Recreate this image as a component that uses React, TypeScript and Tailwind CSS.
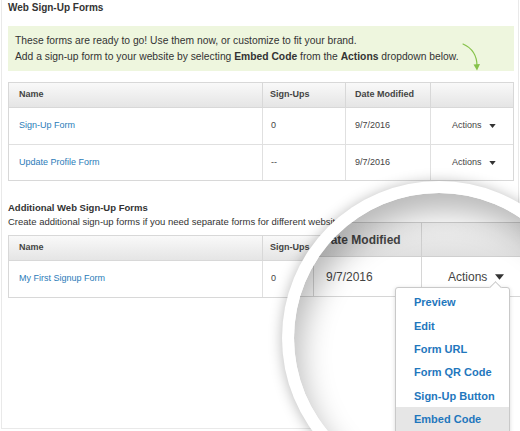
import React from "react";

const font = "font-['Liberation_Sans',Arial,sans-serif]";

type Row = { name: string; signups: string; date: string };

function Caret({ className }: { className?: string }) {
  return (
    <svg viewBox="0 0 8 5" className={className}>
      <path d="M0 0h8L4 5z" fill="currentColor" />
    </svg>
  );
}

function FormsTable({ rows }: { rows: Row[] }) {
  return (
    <div className="border border-[#d8d8d8] text-[9px] text-[#444]">
      <div className="grid grid-cols-[253px_83px_85px_83px] h-[25px] bg-gradient-to-b from-[#f9f9f9] to-[#e5e5e5] font-bold border-b border-[#d8d8d8]">
        <div className="flex items-center pl-[10px]">Name</div>
        <div className="flex items-center pl-[7px] border-l border-[#d8d8d8]">Sign-Ups</div>
        <div className="flex items-center pl-[9px] border-l border-[#d8d8d8]">Date Modified</div>
        <div className="border-l border-[#d8d8d8]" />
      </div>
      {rows.map((r, i) => (
        <div
          key={r.name}
          className={`grid grid-cols-[253px_83px_85px_83px] h-[36px] ${i > 0 ? "border-t border-[#e0e0e0]" : ""}`}
        >
          <div className="flex items-center pl-[10px] text-[#2b7cb9]">{r.name}</div>
          <div className="flex items-center pl-[8px] border-l border-[#e0e0e0]">{r.signups}</div>
          <div className="flex items-center pl-[9px] border-l border-[#e0e0e0]">{r.date}</div>
          <div className="flex items-center pl-[21px] gap-[7px] border-l border-[#e0e0e0]">
            <span>Actions</span>
            <Caret className="w-[7px] h-[4px] text-[#333]" />
          </div>
        </div>
      ))}
    </div>
  );
}

function Magnifier() {
  const items = ["Preview", "Edit", "Form URL", "Form QR Code", "Sign-Up Button", "Embed Code"];
  return (
    <div className="absolute left-[282px] top-[181px] w-[314px] h-[314px] rounded-full bg-white shadow-[0_1px_14px_rgba(0,0,0,0.28)]">
      <div className="absolute left-[12px] top-[12px] w-[290px] h-[290px] rounded-full overflow-hidden bg-white text-[12px] text-[#444]">
        <div className="flex flex-col pt-[29px]">
          {/* magnified header */}
          <div className="grid grid-cols-[19px_108px_1fr] h-[35px] bg-gradient-to-b from-[#f1f1f1] to-[#e0e0e0] border-t border-b border-[#cfcfcf] font-bold">
            <div />
            <div className="flex items-center pl-[8px] border-l border-[#cfcfcf]">Date Modified</div>
            <div className="border-l border-[#cfcfcf]" />
          </div>
          {/* magnified row */}
          <div className="grid grid-cols-[19px_108px_1fr] h-[40px] border-b border-[#d6d6d6]">
            <div />
            <div className="flex items-center pl-[12px] border-l border-[#d6d6d6]">9/7/2016</div>
            <div className="flex items-center pl-[26px] gap-[8px] border-l border-[#d6d6d6]">
              <span>Actions</span>
              <Caret className="w-[9px] h-[6px] text-[#333]" />
            </div>
          </div>
        </div>

        {/* dropdown menu */}
        <div className="absolute left-[101px] top-[94px] w-[115px] h-[220px] bg-white border border-[#c9c9c9] rounded-[3px] shadow-[0_1px_4px_rgba(0,0,0,0.15)] pt-[3px]">
          <div className="absolute left-[95px] top-[-5px] w-[9px] h-[9px] rotate-45 bg-white border-l border-t border-[#c9c9c9]" />
          {items.map((item) => (
            <div
              key={item}
              className={`relative h-[23.3px] flex items-center pl-[18px] text-[11px] font-bold text-[#1f77bd] ${
                item === "Embed Code" ? "bg-[#e6e6e6]" : ""
              }`}
            >
              {item}
            </div>
          ))}
        </div>

        {/* lens shading */}
        <div className="absolute inset-0 rounded-full shadow-[inset_6px_18px_30px_rgba(0,0,0,0.28)] pointer-events-none" />
      </div>
    </div>
  );
}

export default function App() {
  return (
    <div className={`w-[520px] h-[431px] bg-white overflow-hidden relative pl-[1px] pr-[1px] pb-[2px] ${font} text-[#333]`}>
      <div className="h-full border-l border-r border-b border-[#e9e9e9] pl-[6px] pr-[4px]">
        <h2 className="text-[10px] font-bold leading-[16px] text-[#333]">Web Sign-Up Forms</h2>

        <div className="mt-[10px] h-[45px] bg-[#eef6de] flex justify-between pl-[7px] pt-[7px] text-[10.3px] leading-[15.5px]">
          <div className="whitespace-nowrap">
            <p>These forms are ready to go! Use them now, or customize to fit your brand.</p>
            <p>
              Add a sign-up form to your website by selecting <b>Embed Code</b> from the <b>Actions</b> dropdown below.
            </p>
          </div>
          <svg viewBox="0 0 20 30" className="w-[20px] h-[30px] mr-[33px] mt-[9px] shrink-0">
            <path d="M2 2C11 6 16 13 16 24" fill="none" stroke="#86c24a" strokeWidth="1.2" strokeLinecap="round" />
            <path d="M12.5 22.5L16 28.5L19 22Z" fill="#86c24a" />
          </svg>
        </div>

        <div className="mt-[11px]">
          <FormsTable
            rows={[
              { name: "Sign-Up Form", signups: "0", date: "9/7/2016" },
              { name: "Update Profile Form", signups: "--", date: "9/7/2016" },
            ]}
          />
        </div>

        <h3 className="mt-[19px] text-[9.5px] font-bold leading-[15px] text-[#333]">Additional Web Sign-Up Forms</h3>
        <p className="text-[9.5px] leading-[13px] whitespace-nowrap">
          Create additional sign-up forms if you need separate forms for different websites.
        </p>

        <div className="mt-[7px]">
          <FormsTable rows={[{ name: "My First Signup Form", signups: "0", date: "9/7/2016" }]} />
        </div>
      </div>

      <Magnifier />
    </div>
  );
}
